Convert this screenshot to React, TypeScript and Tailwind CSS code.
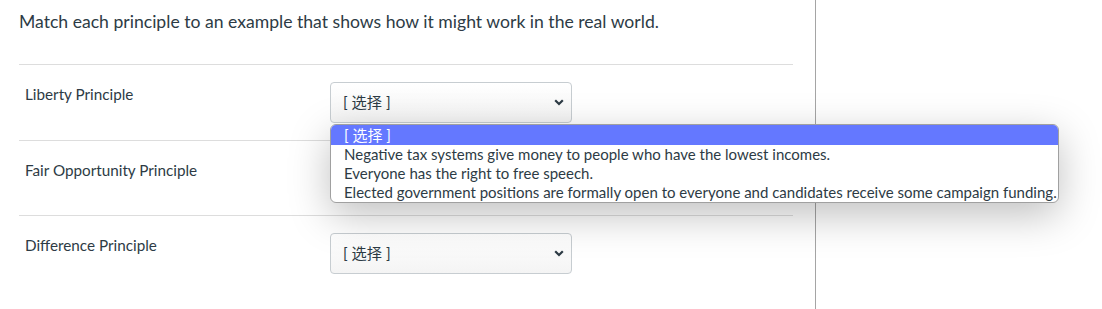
import React from "react"

const font = { fontFamily: 'Lato, "Noto Sans CJK SC", sans-serif' }

const rows = ["Liberty Principle", "Fair Opportunity Principle", "Difference Principle"]

const options = [
  "[ 选择 ]",
  "Negative tax systems give money to people who have the lowest incomes.",
  "Everyone has the right to free speech.",
  "Elected government positions are formally open to everyone and candidates receive some campaign funding.",
]

function Chevron() {
  return (
    <svg width="10" height="7" viewBox="0 0 10 7" className="text-[#2d3b45]">
      <path d="M1.2 1.2 L5 5 L8.8 1.2" fill="none" stroke="currentColor" strokeWidth="2.2" />
    </svg>
  )
}

function FakeSelect({ hidden }: { hidden?: boolean }) {
  return (
    <div
      className={
        "flex h-[41px] w-[242px] items-center justify-between rounded-[4px] border border-[#c7cdd1] bg-gradient-to-b from-white to-[#f4f4f4] pl-[12px] pr-[7px] text-[15.25px] text-[#2d3b45] " +
        (hidden ? "invisible" : "")
      }
    >
      <span>[ 选择 ]</span>
      <Chevron />
    </div>
  )
}

export default function App() {
  return (
    <div className="relative h-[309px] w-[1102px] overflow-hidden bg-white" style={font}>
      <div className="h-full w-[816px] border-r border-[#a5a5a5] pl-[19px] pr-[22px]">
        <p className="pt-[10px] text-[17.6px] leading-[24px] text-[#2d3b45]">
          Match each principle to an example that shows how it might work in the real world.
        </p>
        <div className="mt-[30px] border-t border-[#dddddd]">
          {rows.map((label, i) => (
            <div
              key={label}
              className={
                "flex h-[75.5px] items-start " + (i < rows.length - 1 ? "border-b border-[#dddddd]" : "")
              }
            >
              <div className="w-[311px] pl-[6px] pt-[19px] text-[15.25px] leading-[20px] text-[#2d3b45]">
                {label}
              </div>
              <div className="pt-[16.5px]">
                <FakeSelect hidden={i === 1} />
              </div>
            </div>
          ))}
        </div>
      </div>

      <div className="absolute left-[330px] top-[124px] w-[729px] overflow-hidden rounded-[6px] border border-[#a0a0a0] bg-white text-[15px] leading-[19px] text-[#2d3b45] shadow-[0_12px_40px_rgba(0,0,0,0.25)]">
        {options.map((o, i) => (
          <div
            key={o}
            className={
              "whitespace-nowrap pl-[13px] " + (i === 0 ? "bg-[#6478ff] pt-[1px] text-white" : "")
            }
          >
            {o}
          </div>
        ))}
      </div>
    </div>
  )
}
